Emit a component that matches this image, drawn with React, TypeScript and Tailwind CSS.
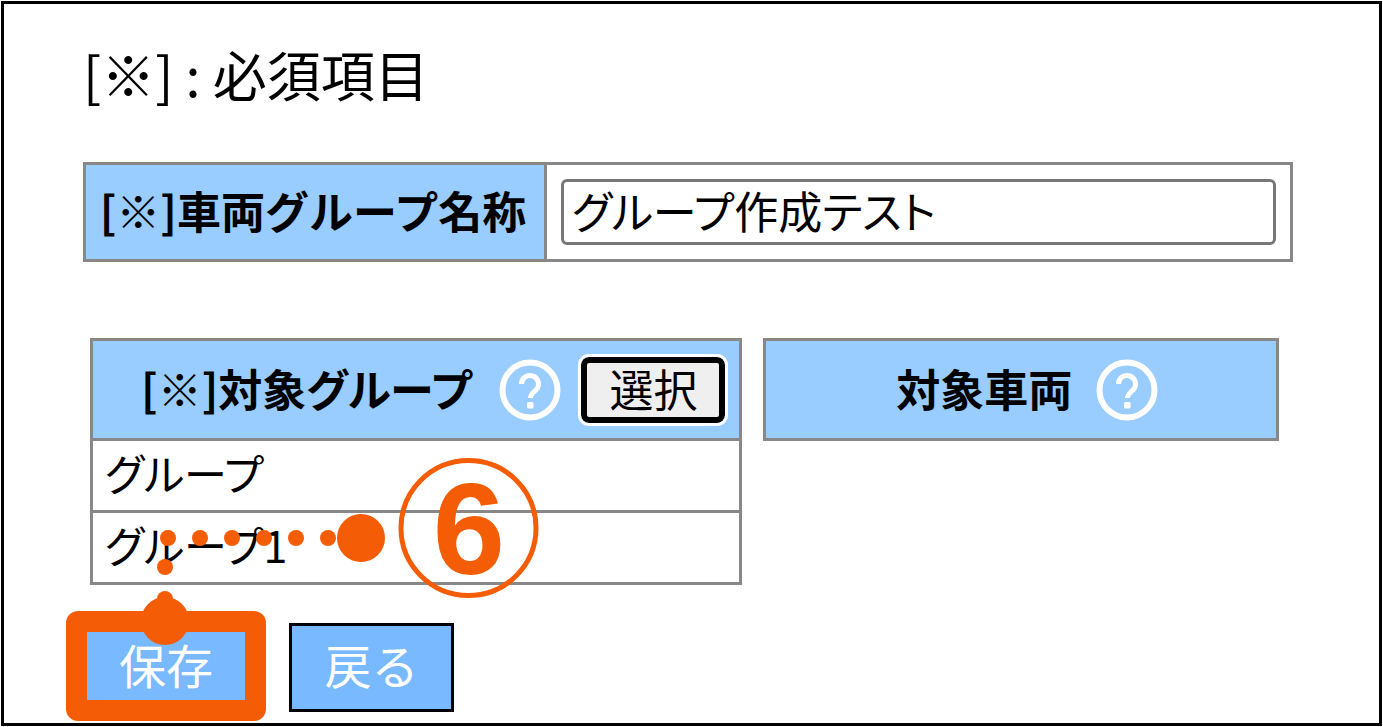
import { useState } from 'react';

const groups = ['グループ', 'グループ1'];

const dots = [
  [168, 538],
  [200, 538],
  [232, 538],
  [264, 538],
  [296, 538],
  [328, 538],
  [165, 567],
  [165, 599],
];

function HelpIcon() {
  return (
    <svg viewBox="0 0 62 62" className="w-[62px] h-[62px] shrink-0" fill="none" stroke="#fff">
      <circle cx="31" cy="31" r="27.5" strokeWidth="6" />
      <path d="M22.500 25a8.500 8.500 0 1 1 14.500 6c-3 2.500-5.500 4-5.500 8" strokeWidth="5" />
      <rect x="28" y="43" width="6.500" height="6.500" rx="1.500" fill="#fff" stroke="none" />
    </svg>
  );
}

function StepMarker() {
  return (
    <svg
      className="absolute left-0 top-0 w-[560px] h-[727px] pointer-events-none"
      viewBox="0 0 560 727"
      fill="#f45d05"
    >
      {dots.map(([x, y]) => (
        <circle key={`${x}-${y}`} cx={x} cy={y} r="8" />
      ))}
      <circle cx="361" cy="538" r="24" />
      <circle cx="165" cy="621" r="24" />
      <circle cx="468.500" cy="528" r="67.500" fill="none" stroke="#f45d05" strokeWidth="5" />
      <text
        x="469"
        y="574"
        textAnchor="middle"
        className="text-[130px] font-bold font-['Liberation_Sans',sans-serif]"
      >
        6
      </text>
    </svg>
  );
}

export default function App() {
  const [name, setName] = useState('グループ作成テスト');

  return (
    <div className="relative min-h-screen flex p-px bg-white text-black font-['Noto_Sans_CJK_JP',sans-serif]">
      <main className="flex-1 border-3 border-black pt-10 pl-[79px] pr-[86px]">
        <p className="text-[54px] leading-[60px]">[※] : 必須項目</p>

        <table className="mt-[58px] w-full border-collapse text-[44px] leading-[60px]">
          <tbody>
            <tr className="h-[97px]">
              <th scope="row" className="w-[461px] border-3 border-[#888] bg-[#99ccff] p-0 pb-1 pr-1 font-bold whitespace-nowrap">
                <label htmlFor="group-name">[※]車両グループ名称</label>
              </th>
              <td className="border-3 border-[#888] px-[14px] py-0">
                <input
                  id="group-name"
                  type="text"
                  value={name}
                  onChange={(e) => setName(e.target.value)}
                  className="block w-full h-[66px] rounded-md border-3 border-[#777] bg-white px-2 pb-1 [font-feature-settings:'palt']"
                />
              </td>
            </tr>
          </tbody>
        </table>

        <div className="mt-[76px] ml-[7px] mr-[14px] grid grid-cols-[653fr_516fr] items-start gap-[21px]">
          <table className="w-full border-collapse text-[44px] leading-[60px]">
            <thead>
              <tr className="h-[100px]">
                <th className="border-3 border-[#888] bg-[#99ccff] p-0 font-bold">
                  <div className="flex items-center justify-end pr-[14px]">
                    <span className="whitespace-nowrap pb-1 [font-feature-settings:'palt']">[※]対象グループ</span>
                    <span className="ml-7 flex">
                      <HelpIcon />
                    </span>
                    <button
                      type="button"
                      className="ml-5 h-[66px] w-[144px] rounded-lg border-6 border-black bg-[#efefef] pb-1 font-normal leading-[50px] outline-3 outline-white"
                    >
                      選択
                    </button>
                  </div>
                </th>
              </tr>
            </thead>
            <tbody>
              {groups.map((group) => (
                <tr key={group} className="h-[72px]">
                  <td className="border-3 border-[#888] px-3 pt-0 pb-2 text-[43px] [font-feature-settings:'palt']">
                    {group}
                  </td>
                </tr>
              ))}
            </tbody>
          </table>

          <table className="w-full border-collapse text-[44px] leading-[60px]">
            <thead>
              <tr className="h-[100px]">
                <th className="border-3 border-[#888] bg-[#99ccff] p-0 font-bold">
                  <div className="flex items-center justify-center gap-6 pl-3">
                    <span className="pb-1">対象車両</span>
                    <HelpIcon />
                  </div>
                </th>
              </tr>
            </thead>
          </table>
        </div>

        <div className="mt-[38px] flex gap-[41px] text-[47px] leading-[60px] text-white">
          <button type="button" className="relative ml-px h-[89px] w-[164px] border-3 border-black bg-[#79b9ff] pb-2">
            保存
            <span className="absolute -left-[21px] -top-[15px] h-[110px] w-[200px] rounded-xl shadow-[inset_0_0_0_21px_#f45d05]" />
          </button>
          <button type="button" className="h-[89px] w-[165px] border-3 border-black bg-[#79b9ff] pb-2">
            戻る
          </button>
        </div>
      </main>
      <StepMarker />
    </div>
  );
}
